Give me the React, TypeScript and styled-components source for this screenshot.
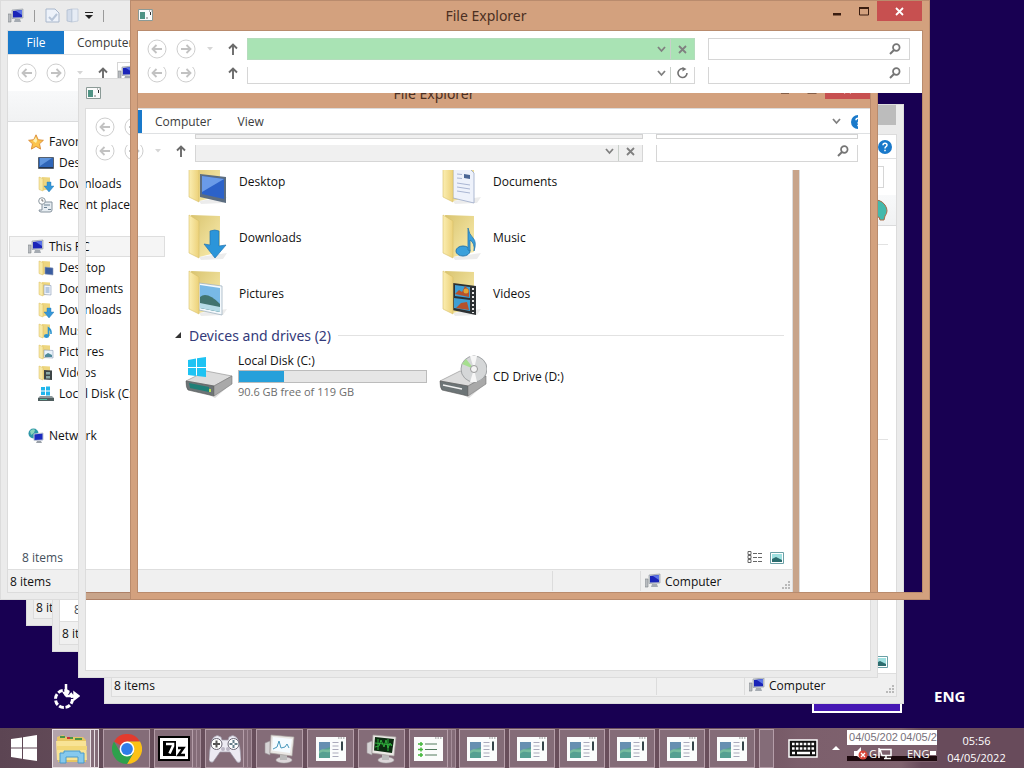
import React from 'react';
import styled, { createGlobalStyle, css } from 'styled-components';

const GlobalStyle = createGlobalStyle`
  * { box-sizing: border-box; }
  body { margin: 0; background: #180052; }
  body, button, input { font-family: "Open Sans", "Noto Sans", sans-serif; font-size: 12px; color: #111; }
  button { padding: 0; border: 0; background: none; }
  svg { display: block; flex: none; }
`;

const GREY = '#ebebeb';
const COPPER = '#d3a17e';

/* ---------- desktop ---------- */

const Screen = styled.div`
  min-height: 100vh;
  display: flex;
  flex-direction: column;
  background: #180052;
`;

const Desk = styled.main`
  position: relative;
  flex: 1;
  min-height: 712px;
  overflow: hidden;
`;

const Placed = styled.div<{ $x: number; $y: number }>`
  position: absolute;
  left: ${p => p.$x}px;
  top: ${p => p.$y}px;
`;

const Frame = styled.section<{ $x: number; $y: number; $tone?: string; $right?: string; $fill?: string; $edge?: string }>`
  position: absolute;
  left: ${p => p.$x}px;
  top: ${p => p.$y}px;
  width: 800px;
  height: 600px;
  display: flex;
  flex-direction: column;
  border: 0 solid ${p => p.$tone ?? GREY};
  border-width: 0 8px 8px;
  border-right-color: ${p => p.$right ?? p.$tone ?? GREY};
  background: ${p => p.$fill ?? '#fff'};
  background-clip: padding-box;
  outline: 1px solid ${p => p.$edge ?? '#dcdcdc'};
  outline-offset: -1px;
`;

const Backdrop = styled.div<{ $x: number; $y: number }>`
  position: absolute;
  left: ${p => p.$x}px;
  top: ${p => p.$y}px;
  width: 800px;
  height: 600px;
  background: #fff;
`;

const InnerEdge = styled.i<{ $edge: string }>`
  position: absolute;
  inset: 30px -1px -1px -1px;
  border: 1px solid ${p => p.$edge};
  pointer-events: none;
`;

/* ---------- title bars ---------- */

const Bar = styled.header<{ $tone: string; $lead?: boolean }>`
  flex: none;
  height: 31px;
  display: flex;
  align-items: flex-start;
  background: ${p => (p.$lead ? `linear-gradient(to right, ${GREY} 48px, ${p.$tone} 48px)` : p.$tone)};
  border-bottom: 1px solid ${p => (p.$tone === GREY ? '#dcdcdc' : '#b98b6d')};
  border-top: 1px solid ${p => (p.$tone === GREY ? '#dcdcdc' : '#b98264')};
`;

const BarIcon = styled.span`
  padding-top: 8px;
`;

const BarTitle = styled.h1`
  flex: 1;
  margin: 0;
  padding-right: 4px;
  font-family: "Noto Sans", "Open Sans", sans-serif;
  font-size: 14px;
  line-height: 29px;
  font-weight: 400;
  text-align: center;
  color: #4b2f22;
`;

const BarButton = styled.button<{ $close?: string }>`
  width: ${p => (p.$close ? 45 : 27)}px;
  height: 20px;
  display: flex;
  justify-content: center;
  align-items: center;
  background: ${p => p.$close ?? 'transparent'};
`;

const QuickTools = styled.div`
  display: flex;
  align-items: center;
  height: 29px;
  gap: 6px;
`;

const QuickRule = styled.i`
  width: 1px;
  height: 12px;
  margin: 0 4px;
  background: #9a9a9a;
`;

/* ---------- tabs and navigation ---------- */

const Tabs = styled.nav`
  flex: none;
  display: flex;
  align-items: center;
  height: 24px;
  background: #fff;
  border-bottom: 1px solid #dfe1e3;
`;

const FileTab = styled.button`
  align-self: stretch;
  width: 56px;
  background: #1979ca;
  color: #fff;
`;

const FileTabEdge = styled.i`
  align-self: stretch;
  width: 4px;
  background: #1979ca;
`;

const Tab = styled.button`
  padding: 0 13px;
  color: #3c3c3c;
`;

const TabSpace = styled.span`
  flex: 1;
`;

const HelpClip = styled.button<{ $cut?: boolean }>`
  width: ${p => (p.$cut ? 7 : 14)}px;
  margin: 0 ${p => (p.$cut ? 12 : 4)}px 0 10px;
  overflow: hidden;
`;

const Row = styled.div<{ $cut?: boolean }>`
  flex: none;
  height: ${p => (p.$cut ? 17 : 22)}px;
  overflow: hidden;
  display: flex;
  align-items: flex-end;
  padding: 0 12px 0 9px;
`;

const RoundButton = styled.button`
  flex: none;
  width: 20px;
  height: 22px;
  display: flex;
  align-items: center;
  margin-right: 9px;
`;

const SmallButton = styled.button<{ $w: number; $gap: number }>`
  flex: none;
  width: ${p => p.$w}px;
  height: 22px;
  display: flex;
  align-items: center;
  justify-content: center;
  margin-right: ${p => p.$gap}px;
`;

const Field = styled.div<{ $fill: string; $search?: boolean }>`
  ${p => (p.$search ? css`flex: none; width: 202px; margin-left: 13px;` : css`flex: 1; min-width: 0;`)}
  height: 22px;
  display: flex;
  align-items: center;
  border: 1px solid ${p => (p.$fill === '#a9e3b4' ? '#b4dcbc' : '#d6d6d6')};
  background: ${p => p.$fill};
`;

const FieldInput = styled.input`
  flex: 1;
  min-width: 0;
  height: 18px;
  border: 0;
  outline: 0;
  padding: 0 4px;
  background: transparent;
`;

const FieldButton = styled.button<{ $ruled?: boolean }>`
  width: ${p => (p.$ruled ? 24 : 18)}px;
  height: 20px;
  display: flex;
  justify-content: center;
  align-items: center;
  border-left: ${p => (p.$ruled ? '1px solid #c9cfca' : '0')};
`;

const SearchButton = styled.button`
  width: 28px;
  display: flex;
  justify-content: center;
`;

const Remnant = styled.div`
  display: flex;
  gap: 13px;
  height: 5px;
  padding: 0 12px 0 57px;
`;

const RemnantField = styled.i<{ $search?: boolean }>`
  ${p => (p.$search ? css`width: 202px;` : css`flex: 1; background: #f0f0f0;`)}
  border: 1px solid #d3d3d3;
`;

const Stacked = styled.div`
  padding: 7px 0 9px;
  display: flex;
  flex-direction: column;
  gap: 7px;
  background: #fff;
`;

const NavHolder = styled.div`
  flex: none;
  padding: 7px 0;
`;

const Ribbon = styled.div`
  flex: none;
  height: 31px;
  display: flex;
  justify-content: flex-end;
  align-items: center;
  padding-right: 8px;
  background: linear-gradient(#f8f9fa, #f1f2f3);
  border-bottom: 1px solid #dadbdc;
`;

/* ---------- explorer body ---------- */

const Body = styled.div`
  flex: 1;
  min-height: 0;
  display: flex;
`;

const Side = styled.nav`
  width: 157px;
  padding-top: 9px;
`;

const SideGroup = styled.ul`
  list-style: none;
  margin: 0 0 21px;
  padding: 0;
`;

const SideItem = styled.li<{ $picked?: boolean }>`
  height: 21px;
  margin-left: 1px;
  ${p => p.$picked && css`background: #f5f5f5; box-shadow: inset 0 0 0 1px #dedede;`}
`;

const SideLink = styled.a<{ $root?: boolean }>`
  display: flex;
  align-items: center;
  gap: 5px;
  height: 21px;
  padding-left: ${p => (p.$root ? 19 : 29)}px;
  color: #111;
  text-decoration: none;
  white-space: nowrap;
`;

const Files = styled.div`
  flex: 1;
  padding: 31px 8px 0 10px;
`;

const Tiles = styled.div`
  display: grid;
  grid-template-columns: 254px 254px;
  padding-left: 10px;
`;

const Tile = styled.a`
  display: flex;
  align-items: center;
  gap: 6px;
  height: 56px;
  color: #111;
  text-decoration: none;
`;

const GroupHead = styled.h2`
  display: flex;
  align-items: center;
  gap: 7px;
  height: 27px;
  margin: 0;
  padding-top: 2px;
  font-family: "Noto Sans", "Open Sans", sans-serif;
  font-size: 14px;
  font-weight: 400;
  color: #333a7a;
  &::after { content: ""; flex: 1; height: 1px; background: #e2e2e2; }
`;

const DriveText = styled.span`
  width: 189px;
  flex: none;
  line-height: 18px;
  margin-left: -1px;
`;

const Meter = styled.span`
  display: block;
  height: 13px;
  border: 1px solid #bcbcbc;
  background: #e6e6e6;
`;

const MeterFill = styled.span`
  display: block;
  height: 11px;
  background: #26a0da;
`;

const Muted = styled.small`
  display: block;
  font-size: 11px;
  line-height: 18px;
  color: #6d6d6d;
`;

const BlankFiles = styled.div`
  flex: 1;
  padding: 18px 8px 0;
`;

const GroupRule = styled.hr`
  margin: 0 0 194px;
  border: 0;
  height: 1px;
  background: #e2e2e2;
`;

const Details = styled.div`
  flex: none;
  height: 23px;
  display: flex;
  align-items: center;
  gap: 7px;
  padding: 0 8px 0 14px;
  color: #44505c;
`;

const DetailsText = styled.span`
  flex: 1;
`;

const Status = styled.footer`
  flex: none;
  height: 23px;
  display: flex;
  align-items: center;
  padding-left: 2px;
  background: #f0f0f0;
  border-top: 1px solid #dedede;
`;

const StatusText = styled.span`
  flex: 1;
`;

const StatusCell = styled.span<{ $w: number }>`
  width: ${p => p.$w}px;
  height: 20px;
  display: flex;
  align-items: center;
  gap: 4px;
  padding-left: 4px;
  border-left: 1px solid #dcdcdc;
`;

const Grip = styled.span`
  align-self: flex-end;
  margin-left: auto;
  padding: 1px;
`;

const Filler = styled.div`
  flex: 1;
`;

/* ---------- overlay window parts ---------- */

const Chrome = styled.div`
  flex: none;
  padding-bottom: 8px;
  background: #fff;
`;

const ChromeTop = styled.div`
  display: flex;
  height: 36px;
`;

const ChromeLead = styled.div`
  width: 52px;
  padding-top: 7px;
  overflow: hidden;
`;

const ChromeTabs = styled.div`
  flex: 1;
  padding-top: 1px;
`;

const RightEdge = styled.i`
  position: absolute;
  top: 0;
  right: -8px;
  width: 8px;
  height: 522px;
  background: ${COPPER};
  border: solid #b98b6d;
  border-width: 0 1px;
`;

const LowerEdge = styled.i`
  position: absolute;
  top: 514px;
  left: 0;
  width: 50px;
  height: 8px;
  background: #c8a48a;
  border: solid #ad8168;
  border-width: 1px 0;
`;

const LangTile = styled.div`
  width: 90px;
  height: 40px;
  background: #4617b4;
  border: 2px solid #fff;
`;

const LangLabel = styled.span`
  font-size: 15px;
  font-weight: 700;
  line-height: 20px;
  color: #fff;
`;

/* ---------- taskbar ---------- */

const Taskbar = styled.footer`
  height: 40px;
  display: flex;
  align-items: stretch;
  background: linear-gradient(to right, #5c4553, #674e5b 12%, #6a4f5c 70%, #7c5f6c 78%, #7f626e 88%, #684b5b 90%);
`;

const StartButton = styled.button`
  width: 48px;
  display: flex;
  align-items: center;
  justify-content: center;
  margin-right: 4px;
`;

const Apps = styled.div`
  display: flex;
  gap: 4px;
  padding-top: 1px;
  margin-right: 3px;
`;

const AppStack = styled.div<{ $w: number }>`
  width: ${p => p.$w}px;
  display: flex;
`;

const AppButton = styled.button<{ $active?: boolean }>`
  flex: 1;
  min-width: 0;
  display: flex;
  align-items: center;
  justify-content: center;
  overflow: hidden;
  background: ${p => (p.$active ? '#b3a3ab' : '#846c78')};
  border: 1px solid ${p => (p.$active ? '#e8dfe3' : '#b59ea9')};
`;

const StackEdge = styled.i<{ $active?: boolean }>`
  width: 4px;
  background: #846c78;
  border: 1px solid ${p => (p.$active ? '#e8dfe3' : '#a58d99')};
  border-left: 0;
`;

const Tray = styled.div`
  flex: 1;
  display: flex;
  justify-content: flex-end;
`;

const TrayButton = styled.button<{ $gap: number }>`
  display: flex;
  align-items: center;
  margin-right: ${p => p.$gap}px;
`;

const GhostCell = styled.div<{ $w: number }>`
  width: ${p => p.$w}px;
  padding-top: 2px;
`;

const GhostDate = styled.div`
  height: 15px;
  line-height: 15px;
  font-family: "Liberation Sans", sans-serif;
  font-size: 11px;
  text-align: center;
  background: #fff;
  color: #77707a;
  white-space: nowrap;
`;

const GhostIcons = styled.div<{ $pad: number }>`
  height: 17px;
  display: flex;
  align-items: center;
  gap: 1px;
  padding-left: ${p => p.$pad}px;
  line-height: 12px;
  color: #fff;
  font-size: 11px;
  background: linear-gradient(#7c5f6c 11px, #1c090d 11px 16px, #7c5f6c 16px);
`;

const Clock = styled.div`
  width: 79px;
  margin-right: 8px;
  padding-top: 4px;
  text-align: center;
  font-size: 11px;
  line-height: 17px;
  color: #fff;
`;

/* ---------- small drawings ---------- */

const PcIcon = ({ size = 16 }: { size?: number }) => (
  <svg width={size} height={size} viewBox="0 0 16 16">
    <path d="M0 6h3v8H0z" fill="#b9bcc0" stroke="#7d8388" strokeWidth=".6" />
    <path d="M4 2l11-1v9L4 10.500z" fill="#c8ced6" stroke="#8d949c" strokeWidth=".6" />
    <path d="M5 3l9-1v7.300L5 9.500z" fill="#1a24b8" />
    <path d="M8 3l6-1v5z" fill="#5b74e8" />
    <path d="M7 11h5l1 3H6z" fill="#a5abb2" />
  </svg>
);

const AppGlyph = ({ w = 15, h = 12 }: { w?: number; h?: number }) => (
  <svg width={w} height={h} viewBox="0 0 15 12">
    <path d="M.5.500h14v11H.5z" fill="#fbfbfb" stroke="#8b9a96" />
    <path d="M2 3h5v7H2z" fill="#4f9384" />
    <path d="M8 9h2M11 2h1M13 2h.6" stroke="#777" />
    <path d="M12.500 3v3" stroke="#333" />
  </svg>
);

const PageGlyph = () => (
  <svg width="30" height="24" viewBox="0 0 30 24">
    <path d="M0 0h30v24H0z" fill="#fafcfc" />
    <path d="M3 5h11v16H3z" fill="#56a091" />
    <path d="M3 5h11v5L3 14z" fill="#668fb1" />
    <path d="M3 14c4-4 7 0 11-2v3c-5 1-7-2-11 2z" fill="#78bc9f" />
    <path d="M16.500 5.500h6M16.500 9h6M16.500 12.500h6M16.500 16h6M16.500 19.500h6" stroke="#aab" />
    <path d="M26 4.500v9" stroke="#344449" strokeWidth="2" />
    <path d="M22 1h1.500M24.500 1H26M27 1h1.500" stroke="#888" />
  </svg>
);

const MonitorGlyph = ({ dark }: { dark?: boolean }) => (
  <svg width="32" height="30" viewBox="0 0 32 30">
    <ellipse cx="20" cy="26" rx="8" ry="3" fill="#ddd7da" stroke="#aaa" strokeWidth=".5" />
    <path d="M16 20h7v6h-7z" fill="#bbb" />
    <path d="M1 9l5-2v14l-5-2z" fill="#d6d3d5" stroke="#9b9598" strokeWidth=".6" />
    <path d="M7 1l23 2-2 19-22-3z" fill="#ebe8e5" stroke="#a6a09e" strokeWidth=".7" />
    <path d="M9 3l19 2-2 14L8 16.500z" fill={dark ? '#0b2b10' : '#f5fbff'} />
    {dark ? (
      <path d="M9 13l4-1 2-6 3 7 2-7 2 8 2-5 2 3M9 9l17 2M12 5v11M22 5v12" stroke="#2fae3c" fill="none" />
    ) : (
      <path d="M9 15l4-2 2-6 2 7 4-1 2-3 2 4" stroke="#4798bd" fill="none" />
    )}
  </svg>
);

const ListGlyph = () => (
  <svg width="29" height="24" viewBox="0 0 29 24">
    <path d="M0 0h29v24H0z" fill="#fbfcfb" />
    <path d="M4 7h5M4 12.500h5M4 18h5M7 5v4M7 10.500v4M7 16v4" stroke="#45b63c" strokeWidth="1.500" />
    <path d="M11 7h12M11 12.500h12M11 18h12" stroke="#527a5d" />
    <path d="M21 1h1.500M23.500 1H25M26 1h1.500" stroke="#888" />
  </svg>
);

const WinLogo = ({ size, color }: { size: number; color: string }) => (
  <svg width={size} height={size} viewBox="0 0 26 26" fill={color}>
    <path d="M0 4l11-1.600V12.500H0zM12 2.200L26 0v12.500H12zM0 13.500h11v10.200L0 22zM12 13.500h14V26l-14-2.100z" />
  </svg>
);

const ExplorerGlyph = () => (
  <svg width="32" height="30" viewBox="0 0 32 30">
    <path d="M1 3l6-2 3 2h17l3 3v22H2z" fill="#e6c563" />
    <path d="M4 3h5M11 4h6M19 5h7" stroke="#4a9447" strokeWidth="2" />
    <path d="M11 4h3" stroke="#c33" strokeWidth="2" />
    <path d="M0 7h30l1 19H1z" fill="#f8e396" />
    <path d="M1 12h30v4H1z" fill="#f2d777" />
    <path d="M4 29V19h4v-2h16v2h4v10h-6v-6H10v6z" fill="#86c9ed" stroke="#4a9aca" />
  </svg>
);

const ChromeGlyph = () => (
  <svg width="30" height="30" viewBox="0 0 30 30">
    <path d="M15 15L2 7.500A15 15 0 0 1 28 7.500H15z" fill="#e33b2e" />
    <path d="M28 7.500A15 15 0 0 1 15 30l6.500-11.200L15 7.500z" fill="#fbc116" />
    <path d="M2 7.500A15 15 0 0 0 15 30l6.500-11.200L8.500 18.800z" fill="#2da14c" />
    <circle cx="15" cy="15" r="7.400" fill="#fff" />
    <circle cx="15" cy="15" r="5.900" fill="#2f7de9" />
  </svg>
);

const SevenZip = () => (
  <svg width="32" height="25" viewBox="0 0 32 25">
    <path d="M1 1h30v23H1z" fill="#fff" stroke="#000" strokeWidth="2" />
    <path d="M5 5h13v15H5z" fill="#000" />
    <path d="M8 8h7v2L11.500 17.500" fill="none" stroke="#fff" strokeWidth="2.600" />
    <path d="M20 12h5.500l-5 7H27" fill="none" stroke="#000" strokeWidth="2.400" />
  </svg>
);

const PadGlyph = () => (
  <svg width="32" height="28" viewBox="0 0 32 28">
    <path d="M5 2q3-3 7 0l1 3h6l1-3q4-3 7 0 4 3 5 23-1 4-4 2l-7-10H11L4 27q-3 1-4-2Q1 5 5 2z" fill="#eceaf2" stroke="#9e98a8" strokeWidth=".7" />
    <circle cx="7.500" cy="9" r="5.500" fill="#fff" stroke="#6a6674" />
    <circle cx="24.500" cy="9" r="5.500" fill="#fff" stroke="#6a6674" />
    <path d="M7.500 5.500v7M4 9h7" stroke="#555" strokeWidth="2" />
    <path d="M24.500 5v3M24.500 10v3M20.500 9h3M25.500 9h3" stroke="#67808b" strokeWidth="2" />
    <circle cx="14" cy="14" r="2" fill="#bbb6c4" />
    <circle cx="19" cy="14" r="2" fill="#bbb6c4" />
  </svg>
);

const KeyboardGlyph = () => (
  <svg width="30" height="19" viewBox="0 0 30 19">
    <path d="M1 1h28v17H1z" fill="#111" stroke="#fff" strokeWidth="1.500" />
    <path d="M4 5h23M4 9.500h23" stroke="#fff" strokeWidth="2.600" strokeDasharray="2.600 1.300" />
    <path d="M4 14h3M9 14h13M24 14h3" stroke="#fff" strokeWidth="2.600" />
  </svg>
);

const RoundArrow = ({ back }: { back?: boolean }) => (
  <svg width="20" height="20" viewBox="0 0 20 20" fill="none">
    <circle cx="10" cy="10" r="9" stroke="#cecece" />
    {back ? (
      <path d="M15 10H6M9.500 6L5.500 10l4 4" stroke="#c2c2c2" strokeWidth="1.800" />
    ) : (
      <path d="M5 10h9M10.500 6l4 4-4 4" stroke="#c2c2c2" strokeWidth="1.800" />
    )}
  </svg>
);

const UpArrow = () => (
  <svg width="10" height="12" viewBox="0 0 10 12" fill="none">
    <path d="M5 12V1.500M1 5.500l4-4 4 4" stroke="#6b6b6b" strokeWidth="1.900" />
  </svg>
);

const DownMark = () => (
  <svg width="8" height="4" viewBox="0 0 8 4">
    <path d="M1 0h6L4 3.500z" fill="#d6d6d6" />
  </svg>
);

const Chevron = () => (
  <svg width="9" height="7" viewBox="0 0 9 7">
    <path d="M1 1l3.500 4L8 1" stroke="#808080" strokeWidth="1.800" fill="none" />
  </svg>
);

const Cross = ({ color = '#808080', size = 9 }: { color?: string; size?: number }) => (
  <svg width={size} height={size} viewBox="0 0 9 9">
    <path d="M1 1l7 7M8 1L1 8" stroke={color} strokeWidth="1.800" />
  </svg>
);

const Reload = () => (
  <svg width="11" height="12" viewBox="0 0 11 12" fill="none">
    <path d="M7 1.800A4.500 4.500 0 1 0 10 6" stroke="#727272" strokeWidth="1.600" />
    <path d="M5.500 0v4.500L9.500 2z" fill="#727272" />
  </svg>
);

const Lens = () => (
  <svg width="12" height="12" viewBox="0 0 12 12" fill="none">
    <circle cx="7.300" cy="4.500" r="3.300" stroke="#757575" strokeWidth="1.700" />
    <path d="M5 7L1 11" stroke="#757575" strokeWidth="2" />
  </svg>
);

const HelpIcon = () => (
  <svg width="14" height="14" viewBox="0 0 14 14">
    <circle cx="7" cy="7" r="7" fill="#1979ca" />
    <path d="M5 5.200q0-2 2-2t2 1.800q0 1-1 1.600T7 8.500M7 9.800v1.500" stroke="#fff" strokeWidth="1.500" fill="none" />
  </svg>
);

const Star = () => (
  <svg width="16" height="16" viewBox="0 0 16 16">
    <path d="M8 .8l2.200 4.900 5.200.6-3.900 3.500 1.100 5.300L8 12.400l-4.600 2.700 1.100-5.300L.6 6.300l5.200-.6z" fill="#fbc44c" stroke="#d98a35" strokeWidth=".9" />
    <path d="M8 3l1.200 3.500L8 9 5 7z" fill="#fdf0b0" />
  </svg>
);

const NetIcon = () => (
  <svg width="16" height="16" viewBox="0 0 16 16">
    <circle cx="5.500" cy="5.500" r="5" fill="#2f97a8" />
    <path d="M2 3q3-3 5-1l-1 3-3 2z" fill="#8bd5ba" />
    <path d="M6 6l9-1v7l-9 .5z" fill="#1b2bc0" stroke="#c0c8d4" />
    <path d="M9 13h4l1 2H8z" fill="#9aa1a8" />
  </svg>
);

type Kind = 'desktop' | 'docs' | 'down' | 'music' | 'pics' | 'video';

const MiniFolder = ({ kind }: { kind: Kind }) => (
  <svg width="16" height="16" viewBox="0 0 16 16">
    <path d="M4 1l8 .5V13l-7 1.500z" fill="#eed67f" />
    <path d="M1 1l4 1.500V15L1 13.500z" fill="#f7e9a5" stroke="#d8bb5e" strokeWidth=".5" />
    {kind === 'desktop' && <path d="M7 7l8 1v7l-8-1z" fill="#3a5ca0" stroke="#8b99b5" strokeWidth=".6" />}
    {kind === 'docs' && (
      <>
        <path d="M6 4l7 .5V14l-7-.5z" fill="#f0f4fb" stroke="#8b9bb5" strokeWidth=".6" />
        <path d="M7.500 7h4M7.500 9h4M7.500 11h4" stroke="#7a9cc5" />
      </>
    )}
    {kind === 'down' && <path d="M9 6h4v4h3l-5 6-5-6h3z" fill="#3597d8" stroke="#1f74b0" strokeWidth=".4" />}
    {kind === 'music' && (
      <>
        <ellipse cx="8.500" cy="13" rx="2.600" ry="2" fill="#2d94cf" />
        <path d="M10.500 13V5q3 2 2.500 6" stroke="#2d94cf" strokeWidth="1.600" fill="none" />
      </>
    )}
    {kind === 'pics' && (
      <>
        <path d="M6 6l9 .5V14l-9-.5z" fill="#e9f2fb" stroke="#8b9bb5" strokeWidth=".6" />
        <path d="M7 11l3-2 4 2v2H7z" fill="#4f8a9a" />
      </>
    )}
    {kind === 'video' && (
      <>
        <path d="M6 5l8 .5V15l-8-.5z" fill="#3d4546" />
        <path d="M8 7h4v2.500H8zM8 11h4v2.500H8z" fill="#8aa9a5" />
      </>
    )}
  </svg>
);

const MiniDesktop = () => (
  <svg width="16" height="14" viewBox="0 0 16 14">
    <path d="M.5 1.500h15v11H.5z" fill="#2f66b8" stroke="#57616e" />
    <path d="M2 2h12L2 10z" fill="#5f95dd" />
    <path d="M1 11.500h14" stroke="#23344c" />
  </svg>
);

const MiniRecent = () => (
  <svg width="16" height="16" viewBox="0 0 16 16">
    <path d="M4 5h10v8q0 2-2 2H3q-2 0-2-2h3z" fill="#e7edf2" stroke="#85929d" />
    <path d="M6 8h6M6 10.500h3M10 12.500h3" stroke="#6d8293" />
    <circle cx="4" cy="4" r="3.300" fill="#fff" stroke="#8c979f" />
    <path d="M4 2v2h1.500" stroke="#555" strokeWidth=".8" fill="none" />
  </svg>
);

const MiniDisk = () => (
  <svg width="16" height="16" viewBox="0 0 16 16">
    <path d="M3 1h4v3.500H3zM8 .5h4v4H8zM3 5.500h4V9H3zM8 5.500h4v4H8z" fill="#20b6ec" />
    <path d="M2 10h12l2 2v3H0v-3z" fill="#8f9a9c" />
    <path d="M0 12h16v3H0z" fill="#4f5f60" />
    <path d="M2 13.500h7" stroke="#4cc0a2" />
  </svg>
);

const BigFolder = ({ kind }: { kind: Kind }) => (
  <svg width="48" height="48" viewBox="0 0 48 48">
    <defs>
      <linearGradient id={`back-${kind}`} x1="0" x2="1" y1="0" y2="1">
        <stop offset="0" stopColor="#d9c470" />
        <stop offset="1" stopColor="#fbeeb0" />
      </linearGradient>
      <linearGradient id={`flap-${kind}`} x1="0" x2="1">
        <stop offset="0" stopColor="#fbeeb2" />
        <stop offset="1" stopColor="#ecd179" />
      </linearGradient>
    </defs>
    <path d="M14 44l28-4-4 6-22 1z" fill="#ececec" />
    <path d="M6 2l29 1v36l-21 5z" fill={`url(#back-${kind})`} />
    {kind === 'desktop' && (
      <>
        <path d="M15 17l26 3v26l-26-6z" fill="#5c6d80" />
        <path d="M17 19l22 3v20l-22-5z" fill="#2c62c9" />
        <path d="M17 19l22 3-22 13z" fill="#6a9be8" />
      </>
    )}
    {kind === 'docs' && (
      <>
        <path d="M14 10l16 1 5 5v30l-21-5z" fill="#eef2fb" stroke="#9ba8c6" strokeWidth=".8" />
        <path d="M25 17l6 1v4l-6-1z" fill="#4c6796" />
        <path d="M18 17l5 .5M18 21l5 .5M18 26l13 2M18 30l13 2M18 34l13 2" stroke="#aab6d3" />
      </>
    )}
    {kind === 'down' && (
      <path d="M25 18q5-2 9 0v15l7-1-11 13-11-14 6 1z" fill="#2b95da" stroke="#2474b0" strokeWidth=".7" />
    )}
    {kind === 'music' && (
      <>
        <ellipse cx="24" cy="38" rx="7" ry="5" fill="#3aa0db" stroke="#2677ae" />
        <path d="M29 37V15q1 6 5 10t1 13q1-8-4-11v11z" fill="#3aa0db" stroke="#2677ae" strokeWidth=".8" />
      </>
    )}
    {kind === 'pics' && (
      <>
        <path d="M14 14l23 3v29l-23-5z" fill="#f4f9fc" stroke="#a2b4c1" strokeWidth=".8" />
        <path d="M15 16l20 3v24l-20-4z" fill="#78b9e6" />
        <path d="M15 28q7-6 20 7v8l-20-4z" fill="#41746f" />
        <path d="M15 34l20 4v5l-20-4z" fill="#b5dbe6" />
      </>
    )}
    {kind === 'video' && (
      <>
        <path d="M14 14l23 3v29l-24-5z" fill="#2c3033" />
        <path d="M16 16l15 2v11l-15-2zM15 29l16 2v11l-16-3z" fill="#3e9fd5" />
        <path d="M16 25l4-4 3 2 3-6 4 4v7zM17 39l5-5 6-1 2 8z" fill="#b6522d" />
        <circle cx="27" cy="22" r="2.500" fill="#e0a637" />
        <path d="M34 19v25" stroke="#e8e8e8" strokeWidth="2" strokeDasharray="2 2" />
      </>
    )}
    <path d="M4 2l10 6v37L4 40z" fill={`url(#flap-${kind})`} stroke="#d8bf68" strokeWidth=".6" />
  </svg>
);

const DriveBody = () => (
  <>
    <path d="M2 32l27 12 17-12-16 14z" fill="#ddd" />
    <path d="M1 29l20-10 26 5-18 10z" fill="#dcdcdc" stroke="#9a9a9a" strokeWidth=".7" />
    <path d="M1 29l28 5v10L3 38q-2-2-2-9z" fill="#6c7476" stroke="#555" strokeWidth=".6" />
    <path d="M29 34l18-10v8L29 44z" fill="#a9a9a9" stroke="#777" strokeWidth=".6" />
  </>
);

const DiskIcon = () => (
  <svg width="48" height="48" viewBox="0 0 48 48">
    <DriveBody />
    <path d="M4 31l20 4v5L5 36z" fill="#1f7f78" />
    <path d="M25 37v3" stroke="#b9e04f" strokeWidth="2" />
    <path d="M3 8l8-1.500V15H3zM12 6.300L21 5v10h-9zM3 16h8v8l-8-1zM12 16h9v9l-9-1z" fill="#1ec3f3" />
  </svg>
);

const CdIcon = () => (
  <svg width="48" height="48" viewBox="0 0 48 48">
    <DriveBody />
    <path d="M4 33l19 4" stroke="#f2f2f2" strokeWidth="1.500" />
    <circle cx="35" cy="17" r="13" fill="#d5d7d8" stroke="#a0a3a5" />
    <path d="M35 17L23 12l4-5z" fill="#a6df8f" />
    <path d="M35 17L31 4h7zM35 17l3 13h-7z" fill="#f7f7f7" />
    <circle cx="35" cy="17" r="3.500" fill="#f4f4f4" stroke="#999" />
  </svg>
);

const ListView = () => (
  <svg width="16" height="13" viewBox="0 0 16 13" fill="none" stroke="#666">
    <path d="M1 .500h3v3H1zM1 4.500h3v3H1zM1 8.500h3v3H1z" />
    <path d="M6 2.500h4M11 2.500h4M6 6.500h4M11 6.500h4M6 10.500h4M11 10.500h4" />
  </svg>
);

const ThumbView = () => (
  <svg width="14" height="12" viewBox="0 0 14 12">
    <path d="M.5.500h13v11H.5z" fill="#fff" stroke="#6ba0a6" />
    <path d="M2 2h10v8H2z" fill="#9fe0e0" />
    <path d="M2 7l4-2 6 3v2H2z" fill="#2c6d6f" />
  </svg>
);

const GripDots = () => (
  <svg width="9" height="9" viewBox="0 0 9 9">
    <path d="M6 0h2v2H6zM3 3h2v2H3zM6 3h2v2H6zM0 6h2v2H0zM3 6h2v2H3zM6 6h2v2H6z" fill="#b9b9b9" />
  </svg>
);

/* ---------- composed parts ---------- */

function WindowButtons({ ink = '#3a1d10', close = '#c75050' }: { ink?: string; close?: string }) {
  return (
    <>
      <BarButton aria-label="Minimize">
        <svg width="10" height="10" viewBox="0 0 10 10"><path d="M1 7h8v2.500H1z" fill={ink} /></svg>
      </BarButton>
      <BarButton aria-label="Maximize">
        <svg width="10" height="9" viewBox="0 0 10 9"><path d="M.5 1.500h9v6.500h-9z" fill="none" stroke={ink} /><path d="M0 0h10v2H0z" fill={ink} /></svg>
      </BarButton>
      <BarButton aria-label="Close" $close={close}><Cross color="#fff" /></BarButton>
    </>
  );
}

function NavRow({ cut, fill = '#fff', reload, icon }: { cut?: boolean; fill?: string; reload?: boolean; icon?: React.ReactNode }) {
  return (
    <Row $cut={cut}>
      <RoundButton aria-label="Back"><RoundArrow back /></RoundButton>
      <RoundButton aria-label="Forward"><RoundArrow /></RoundButton>
      <SmallButton $w={10} $gap={11} aria-label="Recent locations">{!reload && <DownMark />}</SmallButton>
      <SmallButton $w={14} $gap={7} aria-label="Up"><UpArrow /></SmallButton>
      <Field $fill={fill}>
        {icon}
        <FieldInput aria-label="Address" />
        <FieldButton aria-label="Previous locations"><Chevron /></FieldButton>
        <FieldButton $ruled aria-label={reload ? 'Refresh' : 'Stop'}>{reload ? <Reload /> : <Cross />}</FieldButton>
      </Field>
      <Field $fill="#fff" $search>
        <FieldInput aria-label="Search" />
        <SearchButton aria-label="Start search"><Lens /></SearchButton>
      </Field>
    </Row>
  );
}

function StatusBar() {
  return (
    <Status>
      <StatusText>8 items</StatusText>
      <StatusCell $w={88} />
      <StatusCell $w={152}>
        <PcIcon />Computer
        <Grip><GripDots /></Grip>
      </StatusCell>
    </Status>
  );
}

function DetailsBar() {
  return (
    <Details>
      <DetailsText>8 items</DetailsText>
      <button aria-label="Details view"><ListView /></button>
      <button aria-label="Thumbnail view"><ThumbView /></button>
    </Details>
  );
}

const favorites: [string, React.ReactNode][] = [
  ['Desktop', <MiniDesktop />],
  ['Downloads', <MiniFolder kind="down" />],
  ['Recent places', <MiniRecent />],
];

const places: [string, React.ReactNode][] = [
  ['Desktop', <MiniFolder kind="desktop" />],
  ['Documents', <MiniFolder kind="docs" />],
  ['Downloads', <MiniFolder kind="down" />],
  ['Music', <MiniFolder kind="music" />],
  ['Pictures', <MiniFolder kind="pics" />],
  ['Videos', <MiniFolder kind="video" />],
  ['Local Disk (C:)', <MiniDisk />],
];

const folders: [string, Kind][] = [
  ['Desktop', 'desktop'],
  ['Documents', 'docs'],
  ['Downloads', 'down'],
  ['Music', 'music'],
  ['Pictures', 'pics'],
  ['Videos', 'video'],
];

function SideTree({ root, icon, items = [], picked }: { root: string; icon: React.ReactNode; items?: [string, React.ReactNode][]; picked?: boolean }) {
  return (
    <SideGroup>
      <SideItem $picked={picked}><SideLink href="#" $root>{icon}{root}</SideLink></SideItem>
      {items.map(([name, art]) => (
        <SideItem key={name}><SideLink href="#">{art}{name}</SideLink></SideItem>
      ))}
    </SideGroup>
  );
}

function FileExplorer() {
  return (
    <Frame $x={0} $y={0} $right="#c8a48a">
      <Bar $tone={GREY}>
        <QuickTools>
          <PcIcon />
          <QuickRule />
          <svg width="15" height="15" viewBox="0 0 15 15"><path d="M1 1h9l4 4v9H1z" fill="#edf2fa" stroke="#a9b7cb" /><path d="M4 9l3 3 5-6" stroke="#b8c5d8" strokeWidth="2" fill="none" /></svg>
          <svg width="13" height="15" viewBox="0 0 13 15"><path d="M1 2l5-1v13l-5-1z" fill="#d3dcea" stroke="#aab8cc" strokeWidth=".7" /><path d="M6 1h6v12l-6 1z" fill="#e6ecf5" stroke="#b7c4d6" strokeWidth=".7" /></svg>
          <svg width="8" height="7" viewBox="0 0 8 7"><path d="M0 0h8v1H0zM0 3h8L4 7z" fill="#222" /></svg>
          <QuickRule />
        </QuickTools>
      </Bar>
      <Tabs>
        <FileTab>File</FileTab>
        <Tab>Computer</Tab>
      </Tabs>
      <NavHolder><NavRow icon={<PcIcon />} /></NavHolder>
      <Ribbon />
      <Body>
        <Side>
          <SideTree root="Favorites" icon={<Star />} items={favorites} />
          <SideTree root="This PC" icon={<PcIcon />} items={places} picked />
          <SideTree root="Network" icon={<NetIcon />} />
        </Side>
        <Files>
          <Tiles>
            {folders.map(([name, kind]) => (
              <Tile href="#" key={name}><BigFolder kind={kind} />{name}</Tile>
            ))}
          </Tiles>
          <GroupHead>
            <svg width="7" height="7" viewBox="0 0 7 7"><path d="M6 0v6H0z" fill="#333" /></svg>
            Devices and drives (2)
          </GroupHead>
          <Tiles>
            <Tile href="#">
              <DiskIcon />
              <DriveText>
                Local Disk (C:)
                <Meter><MeterFill style={{ width: '24%' }} /></Meter>
                <Muted>90.6 GB free of 119 GB</Muted>
              </DriveText>
            </Tile>
            <Tile href="#"><CdIcon />CD Drive (D:)</Tile>
          </Tiles>
        </Files>
      </Body>
      <DetailsBar />
      <StatusBar />
      <InnerEdge $edge="#dcdcdc" />
    </Frame>
  );
}

function RearExplorer() {
  return (
    <Frame $x={104} $y={104}>
      <Bar $tone={GREY}>
        <BarTitle />
        <WindowButtons ink="#777" close="#bcbcbc" />
      </Bar>
      <Tabs>
        <TabSpace />
        <HelpClip aria-label="Help"><HelpIcon /></HelpClip>
      </Tabs>
      <NavHolder><NavRow /></NavHolder>
      <Ribbon>
        <svg width="20" height="22" viewBox="0 0 20 22"><path d="M3 2q9-3 14 4 4 6 0 11l-1 4h-4l-1-3-8 2z" fill="#43b9ac" stroke="#a86c49" /></svg>
      </Ribbon>
      <BlankFiles><GroupRule /><GroupRule /></BlankFiles>
      <DetailsBar />
      <StatusBar />
      <InnerEdge $edge="#dcdcdc" />
    </Frame>
  );
}

function SmallRear({ at }: { at: number }) {
  return (
    <Frame $x={at} $y={at}>
      <Filler />
      <DetailsBar />
      <StatusBar />
      <InnerEdge $edge="#dcdcdc" />
    </Frame>
  );
}

function MiddleWindow() {
  return (
    <Frame $x={78} $y={78} $fill="transparent">
      <Bar $tone={COPPER} $lead>
        <BarIcon><AppGlyph /></BarIcon>
        <BarTitle>File Explorer</BarTitle>
        <WindowButtons />
      </Bar>
      <Chrome>
        <ChromeTop>
          <ChromeLead>
            <Row>
              <RoundButton aria-label="Back"><RoundArrow back /></RoundButton>
              <RoundButton aria-label="Forward"><RoundArrow /></RoundButton>
            </Row>
          </ChromeLead>
          <ChromeTabs>
            <Tabs>
              <FileTabEdge />
              <Tab>Computer</Tab>
              <Tab>View</Tab>
              <TabSpace />
              <button aria-label="Expand ribbon"><Chevron /></button>
              <HelpClip $cut aria-label="Help"><HelpIcon /></HelpClip>
            </Tabs>
            <Remnant><RemnantField /><RemnantField $search /></Remnant>
          </ChromeTabs>
        </ChromeTop>
        <NavRow cut fill="#f0f0f0" />
      </Chrome>
      <InnerEdge $edge="#dcdcdc" />
      <RightEdge />
      <LowerEdge />
    </Frame>
  );
}

function FrontWindow() {
  return (
    <Frame $x={130} $y={0} $tone={COPPER} $fill="transparent" $edge="#b98b6d">
      <Bar $tone={COPPER}>
        <BarIcon><AppGlyph /></BarIcon>
        <BarTitle>File Explorer</BarTitle>
        <WindowButtons />
      </Bar>
      <Stacked>
        <NavRow fill="#a9e3b4" />
        <NavRow cut reload />
      </Stacked>
      <InnerEdge $edge="#b98b6d" />
    </Frame>
  );
}

function TaskItem({ name, icon, width = 47, stacked, active }: { name: string; icon?: React.ReactNode; width?: number; stacked?: boolean; active?: boolean }) {
  return (
    <AppStack $w={width}>
      <AppButton aria-label={name} $active={active}>{icon}</AppButton>
      {stacked && <><StackEdge $active={active} /><StackEdge $active={active} /></>}
    </AppStack>
  );
}

export default function App() {
  return (
    <Screen>
      <GlobalStyle />
      <Desk>
        <Placed $x={812} $y={673}><LangTile /></Placed>
        <Placed $x={934} $y={686}><LangLabel>ENG</LangLabel></Placed>
        <Placed $x={53} $y={683}>
          <svg width="27" height="27" viewBox="0 0 27 27" fill="none" stroke="#fff">
            <circle cx="11" cy="16" r="8.500" strokeWidth="3" strokeDasharray="5 1.700" />
            <path d="M13 1v12M13 13h10" strokeWidth="2.500" />
            <path d="M10 9l3 4 3-4M21 9l5 4-5 4z" strokeWidth="1.500" fill="#fff" />
          </svg>
        </Placed>
        <SmallRear at={26} />
        <SmallRear at={52} />
        <RearExplorer />
        <Backdrop $x={78} $y={78} />
        <FileExplorer />
        <MiddleWindow />
        <FrontWindow />
      </Desk>
      <Taskbar>
        <StartButton aria-label="Start"><WinLogo size={26} color="#fff" /></StartButton>
        <Apps>
          <TaskItem name="File Explorer" icon={<ExplorerGlyph />} stacked active />
          <TaskItem name="Chrome" icon={<ChromeGlyph />} />
          <TaskItem name="7-Zip" icon={<SevenZip />} stacked />
          <TaskItem name="Game controllers" icon={<PadGlyph />} stacked />
          <TaskItem name="Resource monitor" icon={<MonitorGlyph />} />
          <TaskItem name="Program" icon={<PageGlyph />} />
          <TaskItem name="Performance" icon={<MonitorGlyph dark />} />
          <TaskItem name="Task list" icon={<ListGlyph />} stacked />
        </Apps>
        <Apps>
          {[1, 2, 3, 4, 5, 6].map(n => (
            <TaskItem key={n} name={`Program ${n}`} icon={<PageGlyph />} width={46} />
          ))}
          <TaskItem name="More programs" width={15} />
        </Apps>
        <Tray>
          <TrayButton $gap={14} aria-label="Touch keyboard"><KeyboardGlyph /></TrayButton>
          <TrayButton $gap={7} aria-label="Show hidden icons">
            <svg width="8" height="4" viewBox="0 0 8 4"><path d="M4 0l4 4H0z" fill="#fff" /></svg>
          </TrayButton>
          <GhostCell $w={53}>
            <GhostDate>04/05/202</GhostDate>
            <GhostIcons $pad={7}>
              <svg width="14" height="13" viewBox="0 0 14 13"><path d="M0 4h3l4-4v12L3 9H0z" fill="#fff" /><circle cx="9" cy="8" r="4.500" fill="#d9463a" /><path d="M7 6l4 4M11 6l-4 4" stroke="#fff" strokeWidth="1.300" /></svg>
              G
              <svg width="14" height="13" viewBox="0 0 14 13" fill="none" stroke="#fff"><path d="M2 2.500h11v6H4zM1 1v10M6 11.500h7M8 8v3" strokeWidth="1.500" /></svg>
            </GhostIcons>
          </GhostCell>
          <GhostCell $w={37}>
            <GhostDate>04/05/2</GhostDate>
            <GhostIcons $pad={7}>ENG<svg width="6" height="10" viewBox="0 0 6 10"><path d="M0 2h6v4H0z" fill="#fff" /></svg></GhostIcons>
          </GhostCell>
          <Clock><div>05:56</div><div>04/05/2022</div></Clock>
        </Tray>
      </Taskbar>
    </Screen>
  );
}
